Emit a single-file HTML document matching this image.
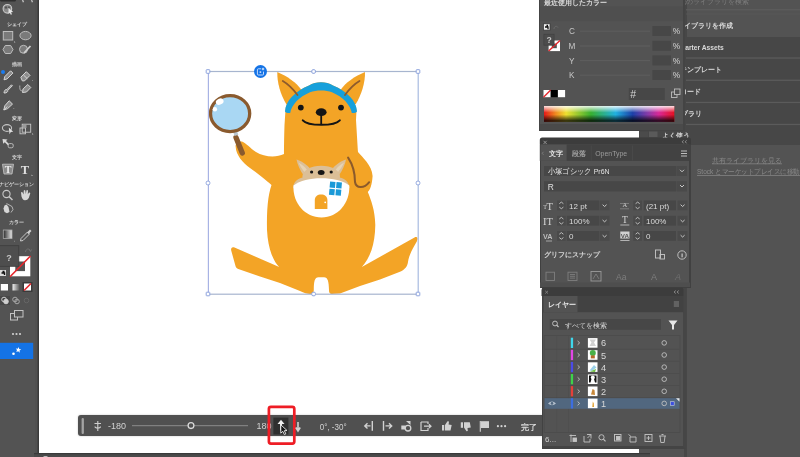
<!DOCTYPE html>
<html><head><meta charset="utf-8">
<style>
*{margin:0;padding:0;box-sizing:border-box}
html,body{width:800px;height:457px;overflow:hidden;background:#535353;font-family:"Liberation Sans",sans-serif;color:#d8d8d8}
.a{position:absolute}
svg{will-change:transform}
#tb{left:0;top:0;width:37px;height:457px;background:#535353}
#tbb{left:34.8px;top:0;width:4px;height:457px;background:linear-gradient(90deg,#505050 0,#505050 60%,#3a3a3a 65%,#3a3a3a 100%)}
#canvas{left:38.8px;top:0;width:600.2px;height:452.5px;background:#fff}
#status{left:34px;top:452.5px;width:616px;height:4.5px;background:linear-gradient(180deg,#3a3a3a 0,#3a3a3a 30%,#4a4a4a 40%,#4a4a4a 100%)}
</style></head><body>
<div class="a" id="tb"></div>
<div class="a" id="tbb"></div>
<svg class="a" style="left:0;top:0" width="39" height="457" viewBox="0 0 39 457">
<rect x="0" y="-3" width="16" height="4.5" rx="1.5" fill="#2e2e2e"/>
<path d="M22.5,0 L23.5,2.2 M31.5,0 L32.5,2.2" stroke="#bdbdbd" stroke-width="1.4"/>
<circle cx="7.4" cy="8.8" r="4.3" fill="#8a8a8a" stroke="#c9c9c9" stroke-width="1.1"/><circle cx="6" cy="7.5" r="1.2" fill="#555"/><circle cx="9" cy="7.2" r="1" fill="#555"/>
<path d="M8.5,8 L13.2,12 L11,12.3 L12,14.3 L10.8,14.8 L9.8,12.8 L8.5,14 Z" fill="#e6e6e6"/>
<text x="16.5" y="25.8" font-size="5.2" fill="#dcdcdc" text-anchor="middle" font-weight="bold">シェイプ</text>
<g fill="#7a7a7a" stroke="#bdbdbd" stroke-width="1">
<rect x="3.3" y="31.5" width="9.4" height="8.5"/>
<ellipse cx="25.5" cy="35.6" rx="5.6" ry="4.2"/>
<path d="M5.3,45.5 L10.7,45.5 L13,49.5 L10.7,53.5 L5.3,53.5 L3,49.5 Z"/>
</g>
<path d="M14,41 L15.5,42.5 L14,42.5 Z" fill="#bbb"/>
<circle cx="23.5" cy="49.3" r="4" fill="#7a7a7a" stroke="#bdbdbd" stroke-width="1"/>
<path d="M24,53 L30.5,46" stroke="#d0d0d0" stroke-width="1.8"/>
<text x="16.5" y="65.5" font-size="5" fill="#d6d6d6" text-anchor="middle" font-weight="bold">描画</text>
<circle cx="3" cy="72" r="2" fill="#1b7cf0"/>
<g fill="#8c8c8c" stroke="#d6d6d6" stroke-width="1" stroke-linejoin="round">
<path d="M4,79.8 L4.8,76.6 L10.6,70.8 L12.9,73.1 L7.1,78.9 Z"/>
<path d="M20.8,77.2 L26.3,71.7 L30,75.4 L24.5,80.9 L22.3,80.9 Z"/>
<path d="M23.5,75 L27.3,78.7" fill="none"/>
<path d="M4,93 C4.2,90.5 5.2,89.3 6.8,89.6 L11.5,84.8 L12.4,85.7 L7.8,90.4 C8,92 6.5,93.2 4,93 Z"/>
<path d="M22.5,92.5 L23.2,88.8 L27.8,84.5 L30.8,87.5 L26.5,92 Z"/>
<path d="M3.8,110 L4.8,105.8 L9.2,100.8 L12.5,104.1 L7.6,108.6 Z"/>
<path d="M3.8,110 L7.2,106.6" fill="none"/>
</g>
<path d="M19.8,85.5 C19.5,90 21,92.5 22.5,89.5" stroke="#bbb" stroke-width="0.9" fill="none"/>
<path d="M32,80 L33,81 L32,81 Z M13.5,108 L14.5,109 L13.5,109 Z" fill="#bbb"/>
<text x="16.5" y="120.3" font-size="5" fill="#d6d6d6" text-anchor="middle" font-weight="bold">変形</text>
<ellipse cx="7" cy="128" rx="4.6" ry="3.4" fill="none" stroke="#c4c4c4" stroke-width="1.1"/>
<path d="M8.8,127.5 L13.2,131.8 L10.8,132 L9.5,134.2 Z" fill="#dedede"/>
<g fill="none" stroke="#c8c8c8" stroke-width="0.9">
<rect x="22.2" y="124.2" width="8.5" height="8"/>
<rect x="20" y="128" width="5.5" height="5.8"/>
</g>
<rect x="23" y="125" width="3.5" height="3" fill="#9a9a9a"/>
<path d="M32,133 L33.5,134.5 L32,134.5 Z" fill="#bbb"/>
<path d="M2.5,139 L7.5,139.5 L6,141 L9,144 L7.8,145.2 L4.8,142.2 L3.2,143.8 Z" fill="#d8d8d8"/>
<rect x="8.2" y="143.6" width="5" height="4.2" rx="1.5" fill="none" stroke="#c4c4c4" stroke-width="0.9"/>
<text x="16.5" y="159.3" font-size="5" fill="#d6d6d6" text-anchor="middle" font-weight="bold">文字</text>
<path d="M2.5,164.2 L13.5,164.2 L12,174 L4,174 Z" fill="#8a8a8a" stroke="#c8c8c8" stroke-width="0.8"/>
<text x="8" y="172.8" font-size="10" fill="#eeeeee" text-anchor="middle" font-family="Liberation Serif" font-weight="bold">T</text>
<text x="25" y="174" font-size="12.5" fill="#e0e0e0" text-anchor="middle" font-family="Liberation Serif" font-weight="bold">T</text><path d="M31.5,174.5 L33,176 L31.5,176 Z" fill="#bbb"/>
<text x="16.5" y="185.5" font-size="4.8" fill="#d6d6d6" text-anchor="middle" font-weight="bold">ナビゲーション</text>
<circle cx="6.5" cy="194" r="3.6" fill="none" stroke="#c8c8c8" stroke-width="1.1"/>
<path d="M9,196.5 L12.5,200" stroke="#c8c8c8" stroke-width="1.5"/>
<path d="M21.5,196.5 L21,192.5 Q21.5,191.5 22.5,192.3 L23.5,194.5 L23.8,190.5 Q24.5,189.6 25.3,190.5 L25.8,194 L26.5,190.3 Q27.3,189.6 28,190.6 L27.8,194.3 L29,192.5 Q30,192.2 30.3,193.2 L28.8,198 Q27.5,200.5 24.8,200.3 Q22.5,200 21.5,196.5 Z" fill="#d8d8d8"/>
<path d="M3.5,208.5 L4.5,205.5 L6.5,204.5 L8.5,207 L9.5,212 L7,213.2 L4.5,212 Z" fill="#d6d6d6"/><path d="M6.5,203.5 L12,206.5 L13,209.5 L11,212.5" fill="none" stroke="#c0c0c0" stroke-width="0.9"/>
<text x="16.5" y="224" font-size="5" fill="#d6d6d6" text-anchor="middle" font-weight="bold">カラー</text>
<defs><linearGradient id="gq" x1="0" x2="1"><stop offset="0" stop-color="#2a2a2a"/><stop offset="1" stop-color="#e8e8e8"/></linearGradient></defs>
<rect x="3.3" y="230" width="8.7" height="8.5" fill="url(#gq)" stroke="#aaa" stroke-width="0.8"/>
<path d="M14,240.5 L15,241.5 L14,241.5 Z" fill="#bbb"/>
<path d="M20.5,241 L21,238.5 L27.5,232 L29.5,234 L23,240.5 Z" fill="none" stroke="#c8c8c8" stroke-width="1"/>
<path d="M27,232.5 L30,229.5 L31.5,231 L28.5,234 Z" fill="#d0d0d0"/>
<path d="M25.5,252 C26,248.5 29,248 30,250.5 M29,249 L30.5,251.5 L31.5,249.5" stroke="#6f6f6f" stroke-width="1" fill="none"/>
<rect x="10" y="256.2" width="20.3" height="20.1" fill="#ffffff"/>
<rect x="15.3" y="261.5" width="9.7" height="9.6" fill="#535353"/>
<path d="M10,276.8 L30.5,256" stroke="#e5252a" stroke-width="1.6"/>
<rect x="-1" y="245.7" width="19.8" height="20.6" fill="#4e4e4e" stroke="#3e3e3e" stroke-width="0.8"/>
<text x="9" y="260.8" font-size="9" fill="#c8c8c8" text-anchor="middle" font-weight="bold">?</text>
<rect x="0" y="270" width="6" height="6" fill="#dcdcdc"/>
<path d="M1.5,273 L4.5,273 L4.5,275 M2.5,271.5 L4.5,271.5" stroke="#111" stroke-width="1.4" fill="none"/>
<rect x="0.8" y="284" width="7.2" height="6.5" fill="#fff"/>
<defs><linearGradient id="gq2" x1="0" x2="1"><stop offset="0" stop-color="#f0f0f0"/><stop offset="1" stop-color="#555"/></linearGradient></defs>
<rect x="12.5" y="284" width="7.2" height="6.5" fill="url(#gq2)"/>
<rect x="22.5" y="282" width="10" height="10" fill="#3a3a3a"/>
<rect x="24" y="283.5" width="7" height="7" fill="#fff"/>
<path d="M24,290.5 L31,283.5" stroke="#e5252a" stroke-width="1.6"/>
<rect x="0" y="296" width="10" height="9" fill="#474747"/>
<g fill="none" stroke="#cfcfcf" stroke-width="1">
<circle cx="4" cy="299.5" r="2.3"/><circle cx="6" cy="301.5" r="2.3" fill="#cfcfcf"/>
<circle cx="15" cy="299.5" r="2.3" stroke="#a8a8a8"/><circle cx="17" cy="301.5" r="2.3" stroke="#a8a8a8"/>
<circle cx="26.5" cy="300.5" r="2.3" stroke="#666"/>
</g>
<g fill="none" stroke="#c4c4c4" stroke-width="1">
<rect x="10.5" y="313.5" width="7" height="6.5"/>
<rect x="14.5" y="310.5" width="8.5" height="6.5" fill="#535353"/>
</g>
<circle cx="13" cy="334" r="1.1" fill="#d0d0d0"/><circle cx="16.5" cy="334" r="1.1" fill="#d0d0d0"/><circle cx="20" cy="334" r="1.1" fill="#d0d0d0"/>
<rect x="0" y="342.8" width="33.2" height="16.2" fill="#1473e6"/>
<path d="M18.5,347 L19.3,349 L21.3,349.5 L19.5,350.5 L19.8,352.8 L18.2,351.2 L16.3,352 L17,350 L15.8,348.5 L17.8,348.8 Z" fill="#fff"/>
<circle cx="13.5" cy="353.7" r="1.3" fill="#fff"/>
</svg>
<div class="a" id="canvas"></div>
<div class="a" id="status"></div>
<div class="a" style="left:43px;top:455.8px;width:5px;height:3px;border-radius:2px;background:#bdbdbd"></div>
<div class="a" style="left:78px;top:415.4px;width:470px;height:21px;background:#505050;border-radius:3px;box-shadow:0 0 2px rgba(0,0,0,0.25)"></div>
<svg class="a" style="left:0;top:0" width="800" height="457" viewBox="0 0 800 457">
<rect x="81.6" y="418" width="2.3" height="16" rx="1" fill="#a3a3a3"/>
<g stroke="#cfcfcf" stroke-width="1.1" fill="none">
<path d="M97.8,421 L97.8,431 M94.5,423.5 L101,423.5 M95,426.5 C95,428.5 100.5,428.5 100.5,426.5"/>
</g>
<text x="107.9" y="429.2" font-size="9.6" fill="#d2d2d2" textLength="18" lengthAdjust="spacingAndGlyphs">-180</text>
<path d="M132,425.7 L248,425.7" stroke="#8c8c8c" stroke-width="1"/>
<circle cx="191" cy="425.6" r="2.9" fill="#505050" stroke="#dadada" stroke-width="1.3"/>
<text x="256.5" y="429.2" font-size="9.6" fill="#d2d2d2" textLength="15" lengthAdjust="spacingAndGlyphs">180</text>
<rect x="273.4" y="417.6" width="15" height="16.9" fill="#2f2f2f"/>
<path d="M281,419.8 L284.5,424 L277.5,424 Z" fill="#f0f0f0"/>
<rect x="280" y="423.5" width="2" height="7" fill="#f0f0f0"/>
<path d="M280.8,424.8 L280.8,433.2 L282.8,431.3 L284.3,434.5 L285.8,433.8 L284.3,430.7 L287,430.5 Z" fill="#111" stroke="#f0f0f0" stroke-width="0.9" stroke-linejoin="round"/>
<rect x="268.9" y="406.8" width="25.4" height="36.8" rx="2" fill="none" stroke="#ee1d25" stroke-width="2.7"/>
<path d="M298,422 L298,430 M295.8,427.5 L298,431 L300.2,427.5" stroke="#d0d0d0" stroke-width="1.6" fill="none"/>
<text x="319.7" y="430.3" font-size="9.2" fill="#d2d2d2" textLength="27" lengthAdjust="spacingAndGlyphs">0°, -30°</text>
<g stroke="#d2d2d2" stroke-width="1.4" fill="none">
<path d="M372.3,421 L372.3,430.8 M365,425.9 L370.5,425.9 M367.5,423.3 L364.8,425.9 L367.5,428.5"/>
<path d="M383.5,421 L383.5,430.8 M385.5,425.9 L391.5,425.9 M389,423.3 L391.7,425.9 L389,428.5"/>
<path d="M421,422 L428,422 L428,424 M421,422 L421,430.5 L428,430.5 L428,428 M424,426.2 L431,426.2 M429,424.3 L431,426.2 L429,428.1" stroke-width="1.2"/>
<path d="M480.3,421 L480.3,431.7" stroke-width="1.1"/>
</g>
<g fill="#d2d2d2">
<rect x="401.3" y="425.5" width="4" height="4"/>
<path d="M406,421 L410.5,421 L410.5,425 Z"/>
<circle cx="408" cy="428.2" r="2.8" fill="none" stroke="#d2d2d2" stroke-width="1.3"/>
<rect x="442" y="425" width="2.2" height="5.5"/>
<path d="M445,425 L447.5,421.2 L449,421.5 L448.6,424.5 L451.7,425 L450.5,430.5 L445,430.5 Z"/>
<rect x="460.8" y="422.3" width="2.2" height="5.5"/>
<path d="M464,422.3 L469.8,422.3 L470.8,427.5 L467.5,428 L467.8,431 L466.5,431.2 L464,427.5 Z"/>
<path d="M481,421.2 L489,421.2 L489,428 L481,428 Z"/>
<circle cx="497.9" cy="426.2" r="1.1"/><circle cx="501.5" cy="426.2" r="1.1"/><circle cx="505.1" cy="426.2" r="1.1"/>
</g>
<text x="520.8" y="430.2" font-size="8.4" fill="#dadada" font-weight="bold">完了</text>
</svg>
<svg class="a" style="left:0;top:0" width="800" height="457" viewBox="0 0 800 457">
<g id="roo">
<path fill="#f3a426" d="M277.3,72 C287,76 297,83 301.5,90 L292,106 L286.5,104.5 C280.5,95 277,82 277.3,72 Z"/>
<path fill="#f3a426" d="M365,72 C355,76 345,83 340.5,90 L350,106 L355.8,104 C361.5,95 365.3,82 365,72 Z"/>
<path fill="#f3a426" d="M285.5,110 L284.5,125 C284,140 284,150 284,154 C276,158 264,157 256,152 C250,148 246,143 242,141.5 C238,141 235,144 235.7,147 C236,155 243,163 250,168 C257,173 266,180 271.5,185 C268,195 266.5,210 267,230 C268,250 274,262 279.2,267 L234.5,247.5 C232,246.5 230.6,248.2 231.2,250.5 L235.5,266 C236,268 237,268.5 239,269.2 L260,276.4 L280,283 L300,291 C304,292.8 307,294 310.5,294.2 C312.5,294.2 313.6,293 313.8,290 C313.8,282 314.5,277.3 318.5,277.3 L324,277.3 C328,277.3 328.8,282 329,290 C328.9,293 330,294.2 332,294 L340,293.5 L360,286 L380,279.5 L400,271.8 C405,269.5 407.5,266.5 408,262 C409,255 413,248 416.8,241.5 C418.3,238.5 417.5,236 414.5,237.5 L361.8,267 C370,258 375,245 375.3,225 C375,210 371,200 367.8,192 C370,190 372,185 372.6,176 C372,165 362,157 358,152 L357.8,150 L356,120 L356.5,110 C356,101 347,91 333,85.5 C326,81.3 316,81.3 309,85.5 C295,91 286,101 285.5,110 Z"/>
<path fill="#17a0db" d="M285,111.5 C285.5,101 295,91 309,85.5 C316,81.3 326,81.3 333,85.5 C347,91 356.5,101 357,111.5 C356,113 353.5,113.3 351.8,113 C350.5,105 343,97 332,92.3 C326,89.8 316,89.8 310,92.3 C299,97 291.5,105 290.2,113 C288.5,113.3 286,113 285,111.5 Z"/>
<path fill="none" stroke="#8d5b2d" stroke-width="1.8" stroke-linecap="round" d="M282.8,81 Q290.5,85.5 297.5,95"/>
<path fill="none" stroke="#8d5b2d" stroke-width="1.8" stroke-linecap="round" d="M359.5,81 Q351.8,85.5 345,95"/>
<circle cx="300.8" cy="107.6" r="2.9" fill="#151515"/>
<circle cx="341" cy="107.6" r="2.9" fill="#151515"/>
<ellipse cx="321.2" cy="112.2" rx="5.4" ry="3.9" fill="#151515"/>
<path fill="none" stroke="#151515" stroke-width="1.8" d="M321.2,114 L321.2,124.5"/>
<path fill="none" stroke="#151515" stroke-width="2" stroke-linecap="round" d="M302.8,120.3 C308,126.3 334.5,126.3 339.8,120.3"/>
<path fill="none" stroke="#8b5a2b" stroke-width="2" stroke-linecap="round" d="M348.1,157.6 C353,165 355,175 355,182 C356,188.5 364,189 369.2,182.2"/>
<path fill="#dbbf97" d="M296.5,159.5 C302,161 309,166 311,170.5 C309.5,173.5 306.5,175.5 304,176 C300,170.5 297.5,164.5 296.5,159.5 Z"/>
<path fill="#dbbf97" d="M346,159.5 C340.5,161 333.5,166 331.5,170.5 C333,173.5 336,175.5 338.5,176 C342.5,170.5 345,164.5 346,159.5 Z"/>
<path fill="#e6d3b4" d="M298.5,162.5 C302,164.5 305.5,167.5 307,170 L304.5,172 C302,169 300,166 298.5,162.5 Z M344,162.5 C340.5,164.5 337,167.5 335.5,170 L338,172 C340.5,169 342.5,166 344,162.5 Z"/>
<ellipse cx="321.2" cy="177" rx="18.8" ry="11.3" fill="#dbbf97"/>
<path fill="#dbbf97" d="M293,188 C293.3,182 297.5,178 304,177.5 L307,188 Z M349.5,188 C349.2,182 345,178 338.5,177.5 L335.5,188 Z"/>
<path fill="#ffffff" d="M293.5,185.5 C300,180.5 310,178.3 321.3,178.3 C332.5,178.3 343,180.5 349.3,185.5 C350,203 338,217.5 321.5,217.5 C305,217.5 292.5,203 293.5,185.5 Z"/>
<circle cx="311.6" cy="172" r="1.6" fill="#151515"/>
<circle cx="331.2" cy="172" r="1.6" fill="#151515"/>
<ellipse cx="321.2" cy="172.6" rx="3.4" ry="2.5" fill="#151515"/>
<g transform="rotate(5 335.3 188.7)" fill="#1b9ad8">
<rect x="329.5" y="182" width="5.4" height="6" /><rect x="336" y="182" width="5.4" height="6"/>
<rect x="329.5" y="189.2" width="5.4" height="6"/><rect x="336" y="189.2" width="5.4" height="6"/>
</g>
<path fill="#f3a426" d="M314.8,209 L314.8,200 C314.8,196.3 317.5,194.4 321.1,194.4 C324.7,194.4 327.4,196.3 327.4,200 L327.4,209 Z"/>
<circle cx="325.2" cy="202.3" r="0.9" fill="#fff"/>
<path fill="none" stroke="#8a5a2e" stroke-width="5.3" stroke-linecap="round" d="M236,137.5 L242.3,153"/>
<rect x="233.8" y="131.5" width="4" height="4" fill="#b9c6cf" transform="rotate(-20 235.8 133.5)"/>
<ellipse cx="230.1" cy="113.6" rx="19.6" ry="18" fill="#a9d7f3" stroke="#8a5a2e" stroke-width="3.3"/>
<ellipse cx="219.7" cy="101.6" rx="4" ry="3" fill="#fff" transform="rotate(-25 219.7 101.6)"/>
<circle cx="214.9" cy="109.2" r="2.2" fill="#fff"/>
</g>
<g id="sel" fill="#fff" stroke="#8da3dd" stroke-width="1">
</g><g><rect x="208" y="70.9" width="210.5" height="1.2" fill="#a7b5cf"/><rect x="208" y="293.6" width="210.5" height="1.2" fill="#a7b5cf"/><rect x="207.8" y="71" width="1.2" height="223.5" fill="#a8b3e4"/><rect x="417.6" y="71" width="1.2" height="223.5" fill="#a9bbe0"/></g><g fill="#fff" stroke="#8da3dd" stroke-width="1">
<rect x="206.2" y="69.7" width="3.6" height="3.6" rx="0.5"/>
<rect x="311.8" y="69.7" width="3.6" height="3.6" rx="1.2"/>
<rect x="416.2" y="69.7" width="3.6" height="3.6" rx="0.5"/>
<rect x="206.2" y="181.2" width="3.6" height="3.6" rx="1.2"/>
<rect x="416.2" y="181.2" width="3.6" height="3.6" rx="1.2"/>
<rect x="206.2" y="292.2" width="3.6" height="3.6" rx="0.5"/>
<rect x="311.8" y="292.2" width="3.6" height="3.6" rx="1.2"/>
<rect x="416.2" y="292.2" width="3.6" height="3.6" rx="0.5"/>
</g>
<circle cx="260.5" cy="71.5" r="6.5" fill="#1473e6"/>
<path d="M261,68.8 L258.3,68.8 Q257.4,68.8 257.4,69.7 L257.4,74.2 Q257.4,75 258.3,75 L262.7,75 Q263.5,75 263.5,74.2 L263.5,71.6" fill="none" stroke="#dfeaff" stroke-width="0.85"/>
<rect x="259.6" y="71.3" width="1.6" height="1.6" fill="#cfe0ff"/>
<path d="M263,67.2 L263.5,68.5 L264.8,69 L263.5,69.5 L263,70.8 L262.5,69.5 L261.2,69 L262.5,68.5 Z" fill="#ffffff"/>
</svg>

<!-- libraries panel (right) -->
<div class="a" style="left:684px;top:0;width:116px;height:457px;background:#535353"></div>
<div class="a" style="left:684px;top:0;width:2.5px;height:457px;background:#474747"></div>
<svg class="a" style="left:0;top:0" width="800" height="457" viewBox="0 0 800 457">
<rect x="686" y="9.2" width="114" height="1.2" fill="#5e5e5e"/>
<rect x="686" y="37" width="114" height="108" fill="#474747"/>
<rect x="686" y="57.4" width="114" height="1.3" fill="#5b5b5b"/>
<rect x="686" y="79.6" width="114" height="1.3" fill="#5b5b5b"/>
<rect x="686" y="101.8" width="114" height="1.3" fill="#5b5b5b"/>
<rect x="686" y="123.8" width="114" height="1.3" fill="#5b5b5b"/>
<rect x="686" y="13.6" width="114" height="0.8" fill="#5a5a5a"/><text x="679" y="4.2" font-size="6.6" fill="#7c7c7c">他のライブラリを検索</text>
<g font-size="6.7" fill="#dadada" font-weight="bold">
<text x="677" y="27.5">ライブラリを作成</text>
<text x="678.5" y="50">Starter Assets</text>
<text x="680" y="71.5">テンプレート</text>
<text x="680" y="93.5">ロード</text>
<text x="667" y="115.5">ライブラリ</text>
</g>
<g font-size="7" fill="#8a8a8a">
<text x="747" y="162.5" text-anchor="middle" text-decoration="underline">共有ライブラリを見る</text>
<text x="697" y="174.3" text-decoration="underline" textLength="103" lengthAdjust="spacingAndGlyphs">Stock とマーケットプレイスに移動</text>
</g>
</svg>
<!-- color panel -->
<div class="a" style="left:538.8px;top:0;width:146.5px;height:131px;background:#535353;border-left:1.2px solid #444;border-right:2px solid #444;border-bottom:1px solid #444"></div>
<svg class="a" style="left:0;top:0" width="800" height="457" viewBox="0 0 800 457">
<rect x="540" y="6.6" width="143" height="14.5" fill="#4f4f4f"/>
<text x="543.5" y="5.4" font-size="7.4" fill="#d8d8d8" font-weight="bold" textLength="63" lengthAdjust="spacingAndGlyphs">最近使用したカラー</text>
<rect x="543.5" y="23.8" width="6.5" height="6.3" fill="#f0f0f0" stroke="#333" stroke-width="0.7"/>
<path d="M545,27 L548,27 L548,29.2 M546.5,25.5 L548,25.5" stroke="#111" stroke-width="1.3" fill="none"/>
<path d="M554,29 C554,26 557,25.5 558,27.5" stroke="#6a6a6a" stroke-width="1" fill="none"/>
<rect x="548.6" y="40.5" width="11.4" height="10.6" fill="#fff"/>
<rect x="551.8" y="43.6" width="5" height="4.6" fill="#535353"/>
<path d="M548.6,51.1 L560,40.5" stroke="#e5252a" stroke-width="1.4"/>
<rect x="543.9" y="34.2" width="10.2" height="11" fill="#4c4c4c" stroke="#404040" stroke-width="0.7"/>
<text x="549" y="43.3" font-size="8.6" fill="#c8c8c8" text-anchor="middle" font-weight="bold">?</text>
<g font-size="8.2" fill="#c8c8c8">
<text x="569" y="34.4">C</text>
<text x="568.6" y="49.2">M</text>
<text x="569" y="63.8">Y</text>
<text x="569" y="78.4">K</text>
</g>
<g fill="#5d5d5d">
<rect x="580" y="30.6" width="70" height="1.2"/>
<rect x="580" y="45.4" width="70" height="1.2"/>
<rect x="580" y="60" width="70" height="1.2"/>
<rect x="580" y="74.6" width="70" height="1.2"/>
</g>
<g fill="#474747">
<rect x="652.4" y="26" width="18.6" height="10"/>
<rect x="652.4" y="40.8" width="18.6" height="10"/>
<rect x="652.4" y="55.4" width="18.6" height="10"/>
<rect x="652.4" y="70" width="18.6" height="10"/>
</g>
<g font-size="8.3" fill="#d6d6d6">
<text x="672.8" y="34.3">%</text>
<text x="672.8" y="49.1">%</text>
<text x="672.8" y="63.7">%</text>
<text x="672.8" y="78.3">%</text>
</g>
<rect x="543.5" y="90" width="7.2" height="7.2" fill="#fff"/>
<path d="M543.5,97.2 L550.7,90" stroke="#e5252a" stroke-width="1.3"/>
<rect x="550.7" y="90" width="7.2" height="7.2" fill="#000"/>
<rect x="557.9" y="90" width="7.2" height="7.2" fill="#fff"/>
<rect x="628.8" y="88" width="36" height="12" fill="#474747"/>
<text x="630.2" y="98.4" font-size="10.5" fill="#d6d6d6">#</text>
<rect x="671.5" y="92" width="5.5" height="5.5" fill="none" stroke="#bdbdbd" stroke-width="0.9"/>
<rect x="674.5" y="89" width="5.5" height="5.5" fill="#535353" stroke="#bdbdbd" stroke-width="0.9"/>
<defs>
<linearGradient id="hue" x1="0" x2="1">
<stop offset="0" stop-color="#e81818"/><stop offset="0.09" stop-color="#f08a20"/><stop offset="0.17" stop-color="#eee030"/><stop offset="0.36" stop-color="#38b030"/><stop offset="0.55" stop-color="#20b0e0"/><stop offset="0.68" stop-color="#1c40a8"/><stop offset="0.8" stop-color="#8a3aa8"/><stop offset="0.88" stop-color="#d82898"/><stop offset="1" stop-color="#e81020"/>
</linearGradient>
<linearGradient id="wb" x1="0" x2="0" y1="0" y2="1">
<stop offset="0" stop-color="#fff" stop-opacity="0.88"/><stop offset="0.42" stop-color="#fff" stop-opacity="0"/><stop offset="0.55" stop-color="#000" stop-opacity="0"/><stop offset="1" stop-color="#000" stop-opacity="0.92"/>
</linearGradient>
</defs>
<rect x="544" y="106" width="130.3" height="15.8" fill="url(#hue)"/>
<rect x="544" y="106" width="130.3" height="15.8" fill="url(#wb)"/>
<rect x="540" y="124" width="143" height="6" fill="#4a4a4a"/>
</svg>
<!-- libraries behind "よく使う" -->
<svg class="a" style="left:0;top:0" width="800" height="457" viewBox="0 0 800 457">
<rect x="639" y="131" width="47" height="7" fill="#474747"/>
<rect x="640" y="131.5" width="8" height="5.5" fill="#4b4b4b"/>
<rect x="649" y="131.5" width="8.5" height="5.5" fill="#5a5a5a"/>
<text x="662" y="138.2" font-size="6.8" fill="#d6d6d6" font-weight="bold">よく使う</text>
</svg>
<!-- type panel -->
<div class="a" style="left:539.8px;top:137.5px;width:151.2px;height:150.5px;background:#535353;border-radius:2.5px 2.5px 0 0;border:1px solid #404040;border-top:none;border-right:2px solid #414141"></div>
<svg class="a" style="left:0;top:0" width="800" height="457" viewBox="0 0 800 457">
<path d="M539.8,144.6 L539.8,140 Q539.8,137.5 542.3,137.5 L688.5,137.5 Q691,137.5 691,140 L691,144.6 Z" fill="#3c3c3c"/>
<path d="M543.5,140.8 L546.7,144 M546.7,140.8 L543.5,144" stroke="#9a9a9a" stroke-width="0.9"/>
<path d="M683.5,140.3 L682.3,141.8 L683.5,143.3 M686.5,140.3 L685.3,141.8 L686.5,143.3" stroke="#9a9a9a" stroke-width="0.9" fill="none"/>
<rect x="539.8" y="144.6" width="151.2" height="16.3" fill="#424242"/>
<rect x="540.5" y="144.6" width="26.1" height="16.3" fill="#535353"/>
<rect x="590.8" y="145.5" width="0.8" height="15" fill="#4b4b4b"/>
<rect x="632" y="145.5" width="0.8" height="15" fill="#4b4b4b"/>
<path d="M543.5,151.8 L542.2,153.3 L543.5,154.8" stroke="#888" stroke-width="0.7" fill="none"/>
<text x="548.5" y="156.2" font-size="7.2" fill="#e6e6e6" font-weight="bold">文字</text>
<text x="571.6" y="156.2" font-size="7.2" fill="#9c9c9c" font-weight="bold">段落</text>
<text x="595.2" y="156.2" font-size="7.6" fill="#9c9c9c" textLength="32" lengthAdjust="spacingAndGlyphs">OpenType</text>
<path d="M681,151 L687,151 M681,153.5 L687,153.5 M681,156 L687,156" stroke="#bdbdbd" stroke-width="1"/>
<rect x="544" y="166" width="132.4" height="10" fill="#474747"/>
<rect x="677" y="166" width="10" height="10" fill="#4a4a4a"/>
<text x="547.6" y="174.3" font-size="7.6" fill="#e2e2e2" textLength="62" lengthAdjust="spacingAndGlyphs">小塚ゴシック Pr6N</text>
<path d="M680,169.8 L682,171.8 L684,169.8" stroke="#c8c8c8" stroke-width="1" fill="none"/>
<rect x="544" y="181.2" width="132.4" height="10.2" fill="#474747"/>
<rect x="677" y="181.2" width="10" height="10.2" fill="#4a4a4a"/>
<text x="547.8" y="189.6" font-size="8.4" fill="#e2e2e2">R</text>
<path d="M680,185 L682,187 L684,185" stroke="#c8c8c8" stroke-width="1" fill="none"/>
<rect x="557" y="200.5" width="8.7" height="9.8" fill="#4a4a4a"/><path d="M559.3,203.7 L561.35,202.1 L563.4,203.7 M559.3,207.1 L561.35,208.7 L563.4,207.1" stroke="#c8c8c8" stroke-width="0.9" fill="none"/><rect x="566.8" y="200.5" width="32.2" height="9.8" fill="#474747"/><text x="569.0999999999999" y="208.8" font-size="8" fill="#dcdcdc">12 pt</text><rect x="599.6" y="200.5" width="9.9" height="9.8" fill="#4a4a4a"/><path d="M602.6,204.7 L604.6,206.5 L606.6,204.7" stroke="#c8c8c8" stroke-width="1" fill="none"/><text x="543.3" y="209.3" font-size="6" fill="#cfcfcf" font-family="Liberation Serif">T</text><text x="546.5" y="209.5" font-size="10.5" fill="#d6d6d6" font-family="Liberation Serif">T</text><rect x="557" y="215.8" width="8.7" height="9.8" fill="#4a4a4a"/><path d="M559.3,219.0 L561.35,217.4 L563.4,219.0 M559.3,222.4 L561.35,224.0 L563.4,222.4" stroke="#c8c8c8" stroke-width="0.9" fill="none"/><rect x="566.8" y="215.8" width="32.2" height="9.8" fill="#474747"/><text x="569.0999999999999" y="224.10000000000002" font-size="8" fill="#dcdcdc">100%</text><rect x="599.6" y="215.8" width="9.9" height="9.8" fill="#4a4a4a"/><path d="M602.6,220.0 L604.6,221.8 L606.6,220.0" stroke="#c8c8c8" stroke-width="1" fill="none"/><text x="543" y="225" font-size="10.5" fill="#d6d6d6" font-family="Liberation Serif">IT</text><rect x="557" y="231" width="8.7" height="9.8" fill="#4a4a4a"/><path d="M559.3,234.2 L561.35,232.6 L563.4,234.2 M559.3,237.6 L561.35,239.2 L563.4,237.6" stroke="#c8c8c8" stroke-width="0.9" fill="none"/><rect x="566.8" y="231" width="32.2" height="9.8" fill="#474747"/><text x="569.0999999999999" y="239.3" font-size="8" fill="#dcdcdc">0</text><rect x="599.6" y="231" width="9.9" height="9.8" fill="#4a4a4a"/><path d="M602.6,235.2 L604.6,237 L606.6,235.2" stroke="#c8c8c8" stroke-width="1" fill="none"/><text x="543" y="239" font-size="7.2" fill="#bdbdbd" font-weight="bold">VA</text><path d="M546,241 L552,241" stroke="#bbb" stroke-width="0.8"/><rect x="633.3" y="200.5" width="8.7" height="9.8" fill="#4a4a4a"/><path d="M635.5999999999999,203.7 L637.65,202.1 L639.6999999999999,203.7 M635.5999999999999,207.1 L637.65,208.7 L639.6999999999999,207.1" stroke="#c8c8c8" stroke-width="0.9" fill="none"/><rect x="643.7" y="200.5" width="32.3" height="9.8" fill="#474747"/><text x="646.0" y="208.8" font-size="8" fill="#dcdcdc">(21 pt)</text><rect x="677.6" y="200.5" width="9.9" height="9.8" fill="#4a4a4a"/><path d="M680.6,204.7 L682.6,206.5 L684.6,204.7" stroke="#c8c8c8" stroke-width="1" fill="none"/><text x="624.8" y="207" font-size="6.5" fill="#cfcfcf" text-anchor="middle" font-family="Liberation Serif">A</text><path d="M620.5,203.5 L629,203.5 M620.5,208.8 L629,208.8" stroke="#bbb" stroke-width="0.8" stroke-dasharray="1 1"/><rect x="633.3" y="215.8" width="8.7" height="9.8" fill="#4a4a4a"/><path d="M635.5999999999999,219.0 L637.65,217.4 L639.6999999999999,219.0 M635.5999999999999,222.4 L637.65,224.0 L639.6999999999999,222.4" stroke="#c8c8c8" stroke-width="0.9" fill="none"/><rect x="643.7" y="215.8" width="32.3" height="9.8" fill="#474747"/><text x="646.0" y="224.10000000000002" font-size="8" fill="#dcdcdc">100%</text><rect x="677.6" y="215.8" width="9.9" height="9.8" fill="#4a4a4a"/><path d="M680.6,220.0 L682.6,221.8 L684.6,220.0" stroke="#c8c8c8" stroke-width="1" fill="none"/><text x="624.8" y="222.8" font-size="9.5" fill="#d6d6d6" text-anchor="middle" font-family="Liberation Serif">T</text><path d="M620.3,225 L629.3,225" stroke="#ccc" stroke-width="0.8"/><rect x="633.3" y="231" width="8.7" height="9.8" fill="#4a4a4a"/><path d="M635.5999999999999,234.2 L637.65,232.6 L639.6999999999999,234.2 M635.5999999999999,237.6 L637.65,239.2 L639.6999999999999,237.6" stroke="#c8c8c8" stroke-width="0.9" fill="none"/><rect x="643.7" y="231" width="32.3" height="9.8" fill="#474747"/><text x="646.0" y="239.3" font-size="8" fill="#dcdcdc">0</text><rect x="677.6" y="231" width="9.9" height="9.8" fill="#4a4a4a"/><path d="M680.6,235.2 L682.6,237 L684.6,235.2" stroke="#c8c8c8" stroke-width="1" fill="none"/><rect x="620.3" y="231.5" width="9.2" height="7" fill="#d0d0d0"/><text x="624.9" y="237.8" font-size="6.2" fill="#535353" text-anchor="middle" font-weight="bold">VA</text><path d="M620.3,240.5 L629.5,240.5" stroke="#ccc" stroke-width="0.8"/>
<text x="544" y="257" font-size="7" fill="#d6d6d6" font-weight="bold">グリフにスナップ</text>
<g fill="none" stroke="#c8c8c8" stroke-width="0.9">
<rect x="655.5" y="250" width="5" height="8"/>
<rect x="660" y="254.5" width="4.5" height="4.5"/>
<circle cx="682" cy="255" r="4.2"/>
</g>
<rect x="681.5" y="253.5" width="1.2" height="3.8" fill="#c8c8c8"/>
<g fill="none" stroke="#7e7e7e" stroke-width="0.9">
<rect x="546" y="272.2" width="8.5" height="8.3"/>
<rect x="568" y="272.2" width="9" height="8.3"/>
<path d="M570,274.5 L575,274.5 M570,276.3 L575,276.3 M570,278.1 L575,278.1"/>
<rect x="591" y="271.5" width="10" height="9.5" stroke="#9a9a9a"/>
<path d="M593,279 L596,274 L599,279"/>
</g>
<text x="616" y="280" font-size="8.5" fill="#7e7e7e">Aa</text>
<text x="651" y="280" font-size="9" fill="#7e7e7e">A</text>
<text x="675" y="280" font-size="9" fill="#6f6f6f" font-style="italic">A</text>
<rect x="540" y="282.5" width="150" height="4.5" fill="#4e4e4e"/>
</svg>
<!-- layers panel -->
<div class="a" style="left:541.5px;top:287.6px;width:144.5px;height:161px;background:#535353;border-left:1px solid #424242;border-right:3px solid #464646;border-bottom:3px solid #444;border-radius:2px 2px 0 0"></div>
<svg class="a" style="left:0;top:0" width="800" height="457" viewBox="0 0 800 457">
<path d="M541.5,296 L541.5,290 Q541.5,287.6 544,287.6 L681,287.6 Q683.5,287.6 683.5,290 L683.5,296 Z" fill="#3c3c3c"/>
<path d="M545.2,290.8 L548,293.6 M548,290.8 L545.2,293.6" stroke="#8a8a8a" stroke-width="0.8"/>
<path d="M675.5,290.5 L674.3,292 L675.5,293.5 M678.5,290.5 L677.3,292 L678.5,293.5" stroke="#9a9a9a" stroke-width="0.9" fill="none"/>
<rect x="542.5" y="296" width="141" height="16.2" fill="#424242"/>
<rect x="543.5" y="296" width="34" height="16.2" fill="#535353"/>
<text x="547.5" y="307.2" font-size="7.4" fill="#e6e6e6" font-weight="bold">レイヤー</text>
<path d="M673.8,302 L679,302 M673.8,304 L679,304 M673.8,306 L679,306" stroke="#b0b0b0" stroke-width="0.6"/>
<rect x="549.8" y="319" width="111.2" height="10.7" fill="#474747"/>
<circle cx="555" cy="323.5" r="2.4" fill="none" stroke="#c8c8c8" stroke-width="0.9"/>
<path d="M556.7,325.2 L558.5,327" stroke="#c8c8c8" stroke-width="1.1"/>
<text x="565" y="327.6" font-size="7.3" fill="#d8d8d8">すべてを検索</text>
<path d="M668.5,320.5 L677.5,320.5 L674,325 L674,329.5 L672,329.5 L672,325 Z" fill="#e8e8e8"/>
<rect x="544.2" y="335.5" width="135.8" height="97" fill="none" stroke="#4b4b4b" stroke-width="0.8"/>
<rect x="556.5" y="336" width="0.6" height="96" fill="#4e4e4e"/>
<rect x="568.2" y="336" width="0.6" height="96" fill="#4e4e4e"/>
<rect x="544.5" y="348.80" width="135" height="0.7" fill="#4b4b4b"/><rect x="570.8" y="337.70" width="2.3" height="10.3" fill="#3fd6ea"/><path d="M577.6,341.00 L579.6,342.90 L577.6,344.80" stroke="#c8c8c8" stroke-width="0.9" fill="none"/><rect x="587.9" y="338.10" width="9.6" height="9.6" fill="#ffffff"/><text x="601" y="346.40" font-size="9.2" fill="#d8d8d8">6</text><circle cx="664.2" cy="342.90" r="2.3" fill="none" stroke="#c0c0c0" stroke-width="0.9"/><rect x="544.5" y="360.90" width="135" height="0.7" fill="#4b4b4b"/><rect x="570.8" y="349.80" width="2.3" height="10.3" fill="#e246e6"/><path d="M577.6,353.10 L579.6,355.00 L577.6,356.90" stroke="#c8c8c8" stroke-width="0.9" fill="none"/><rect x="587.9" y="350.20" width="9.6" height="9.6" fill="#ffffff"/><text x="601" y="358.50" font-size="9.2" fill="#d8d8d8">5</text><circle cx="664.2" cy="355.00" r="2.3" fill="none" stroke="#c0c0c0" stroke-width="0.9"/><rect x="544.5" y="373.00" width="135" height="0.7" fill="#4b4b4b"/><rect x="570.8" y="361.90" width="2.3" height="10.3" fill="#4b4be6"/><path d="M577.6,365.20 L579.6,367.10 L577.6,369.00" stroke="#c8c8c8" stroke-width="0.9" fill="none"/><rect x="587.9" y="362.30" width="9.6" height="9.6" fill="#ffffff"/><text x="601" y="370.60" font-size="9.2" fill="#d8d8d8">4</text><circle cx="664.2" cy="367.10" r="2.3" fill="none" stroke="#c0c0c0" stroke-width="0.9"/><rect x="544.5" y="385.10" width="135" height="0.7" fill="#4b4b4b"/><rect x="570.8" y="374.00" width="2.3" height="10.3" fill="#3dd24a"/><path d="M577.6,377.30 L579.6,379.20 L577.6,381.10" stroke="#c8c8c8" stroke-width="0.9" fill="none"/><rect x="587.9" y="374.40" width="9.6" height="9.6" fill="#ffffff"/><text x="601" y="382.70" font-size="9.2" fill="#d8d8d8">3</text><circle cx="664.2" cy="379.20" r="2.3" fill="none" stroke="#c0c0c0" stroke-width="0.9"/><rect x="544.5" y="397.20" width="135" height="0.7" fill="#4b4b4b"/><rect x="570.8" y="386.10" width="2.3" height="10.3" fill="#e5403a"/><path d="M577.6,389.40 L579.6,391.30 L577.6,393.20" stroke="#c8c8c8" stroke-width="0.9" fill="none"/><rect x="587.9" y="386.50" width="9.6" height="9.6" fill="#ffffff"/><text x="601" y="394.80" font-size="9.2" fill="#d8d8d8">2</text><circle cx="664.2" cy="391.30" r="2.3" fill="none" stroke="#c0c0c0" stroke-width="0.9"/><rect x="544.5" y="398.20" width="135" height="10.6" fill="#51677f"/><path d="M548,403.50 Q552,399.70 556,403.50 Q552,407.00 548,403.50 Z" fill="#b8c3cf"/><circle cx="552" cy="403.40" r="1.3" fill="#51677f"/><rect x="670.4" y="401.70" width="3.8" height="3.8" fill="#3b4fe0" stroke="#c8d0e0" stroke-width="0.6"/><path d="M676,398.20 L679.5,398.20 L679.5,401.70 Z" fill="#e8e8e8"/><rect x="570.8" y="398.20" width="2.3" height="10.3" fill="#3d6ee0"/><path d="M577.6,401.50 L579.6,403.40 L577.6,405.30" stroke="#c8c8c8" stroke-width="0.9" fill="none"/><rect x="587.9" y="398.60" width="9.6" height="9.6" fill="#ffffff"/><text x="601" y="406.90" font-size="9.2" fill="#d8d8d8">1</text><circle cx="664.2" cy="403.40" r="2.3" fill="none" stroke="#c0c0c0" stroke-width="0.9"/><g transform="translate(0 -0.60)">
<path d="M589.5,340 L596,340 L594,343 L596,346.5 L589.5,346.5 L591.5,343 Z" fill="#d0d0d0"/>
<circle cx="592.8" cy="353.5" r="3" fill="#48b048"/><rect x="590.8" y="356" width="4" height="3" fill="#b56a2a"/>
<path d="M589.5,371 L594,365.5 L596.5,368 L592,371.5 Z" fill="#9ad0e8"/><path d="M590,372 L596,369.5 L595,372.5 Z" fill="#70c040"/>
<path d="M589,376 L596.5,376 L596.5,383 L595,383 L594,379.5 L591.5,379.5 L590.5,383 L589,383 Z" fill="#111"/><circle cx="592.8" cy="378" r="2" fill="#fff"/>
<path d="M591,395 L592.5,389.5 L594.5,390.5 L595,395.5 Z" fill="#c8883a"/>
<path d="M592.3,407.5 L592.8,402 L593.8,404 L594,407.5 Z" fill="#e0a030"/>
</g>
<text x="545" y="441.5" font-size="8" fill="#d0d0d0">6...</text>
<g fill="none" stroke="#c4c4c4" stroke-width="0.9">
<path d="M571,434.5 L571,442 M569.5,435.5 L576,435.5"/>
<rect x="573" y="438" width="3.5" height="3.5" fill="#c4c4c4"/>
<path d="M584,436 L584,442 L590,442 L590,439 M587,434.5 L591,434.5 L591,438.5 M591,434.5 L587.5,438"/>
<circle cx="601.5" cy="437.3" r="2.6"/><path d="M603.4,439.2 L605.5,441.3" stroke-width="1.2"/>
<rect x="614.5" y="434.5" width="6.5" height="6.5"/><rect x="616.5" y="436.5" width="3.5" height="3.5" fill="#c4c4c4"/>
<path d="M628.5,434.5 L631,436.5 M630,437 L636,437 L636,442 L630,442 Z"/>
<rect x="645" y="434.5" width="7" height="7"/><path d="M648.5,436 L648.5,440 M646.5,438 L650.5,438"/>
<path d="M659,436 L666,436 M660,436 L660.8,442.5 L664.2,442.5 L665,436 M661.5,434.5 L663.5,434.5"/>
</g>
</svg>
</body></html>
